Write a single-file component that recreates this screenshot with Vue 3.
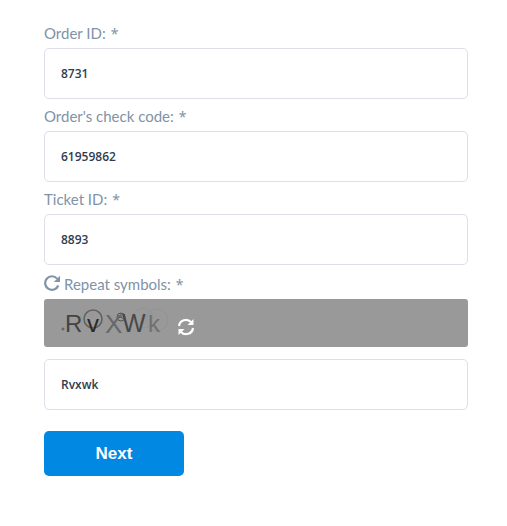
<script setup>
import { ref } from 'vue'

const fields = ref([
  { id: 'order-id', label: 'Order ID:', value: '8731' },
  { id: 'check-code', label: "Order's check code:", value: '61959862' },
  { id: 'ticket-id', label: 'Ticket ID:', value: '8893' },
])
const symbols = ref('Rvxwk')
</script>

<template>
  <form class="form" @submit.prevent>
    <div v-for="field in fields" :key="field.id" class="field">
      <label class="label" :for="field.id">{{ field.label }}<span class="mark">*</span></label>
      <input :id="field.id" v-model="field.value" class="input" type="text" required />
    </div>

    <div class="field">
      <label class="label label-icon" for="symbols">
        <svg class="reload" viewBox="0 0 16 16" aria-hidden="true">
          <path d="M13.1 3.6A6.8 6.8 0 1 0 14.3 10.5" fill="none" stroke="currentColor" stroke-width="2.2" />
          <path d="M16 .8V7H9.8z" fill="currentColor" />
        </svg>
        <span>Repeat symbols:<span class="mark">*</span></span>
      </label>
      <div class="captcha">
        <svg class="code" viewBox="0 0 116 48" aria-hidden="true">
          <g fill="none">
            <circle cx="49" cy="20" r="9" stroke="#626262" stroke-width="1.6" />
            <circle cx="77" cy="18" r="4" stroke="#555" />
            <path d="M77 14v4l4 3M74 19l3-1" stroke="#555" />
            <circle cx="113" cy="21" r="11" stroke="#929292" />
            <circle cx="99" cy="19" r="10" stroke="#949494" />
            <circle cx="19" cy="30" r="1" stroke="#555" />
          </g>
          <g class="glyphs">
            <text x="21" y="33" font-size="24" fill="#444">R</text>
            <text x="43" y="33" font-size="24" fill="#292929">v</text>
            <text x="61" y="34" font-size="26" fill="#686868">X</text>
            <text x="78" y="33" font-size="25" fill="#484848">W</text>
            <text x="104" y="33" font-size="24" fill="#707070">k</text>
          </g>
        </svg>
        <button class="refresh" type="button" aria-label="Refresh symbols">
          <svg viewBox="0 0 18 18" aria-hidden="true">
            <path d="M2 8a7 7 0 0 1 12-4M16 10a7 7 0 0 1-12 4" fill="none" stroke="currentColor" stroke-width="2.2" />
            <path d="M16.5 1v6h-6zM1.5 17v-6h6z" fill="currentColor" />
          </svg>
        </button>
      </div>
      <input id="symbols" v-model="symbols" class="input" type="text" required />
    </div>

    <button class="next" type="submit">Next</button>
  </form>
</template>

<style>
body {
  background: #fff;
}
</style>

<style scoped>
.form {
  padding: 23px 39px 50px 44px;
  font-family: Lato, "Noto Sans", sans-serif;
}
.field {
  margin-bottom: 7px;
}
.label {
  display: block;
  height: 25px;
  line-height: 20px;
  font-size: 15px;
  color: #8093a8;
}
.label-icon {
  display: flex;
  gap: 4px;
  height: 27px;
  line-height: 24px;
}
.mark {
  margin-left: 5px;
  font-family: "Noto Sans", sans-serif;
  font-size: 14px;
  line-height: 1;
}
.reload {
  width: 16px;
  height: 16px;
  margin-top: 3px;
}
.input {
  display: block;
  box-sizing: border-box;
  width: 100%;
  height: 51px;
  padding: 0 16px;
  border: 1px solid #dddfe8;
  border-radius: 5px;
  background: #fff;
  color: #313c4e;
  font-family: "Open Sans", "Noto Sans", sans-serif;
  font-size: 12px;
  font-weight: 600;
}
.captcha {
  display: flex;
  align-items: center;
  gap: 17px;
  height: 48px;
  margin-bottom: 12px;
  border-radius: 3px;
  background: #999;
}
.code {
  width: 116px;
  height: 48px;
  overflow: visible;
}
.glyphs {
  font-family: "Liberation Sans", sans-serif;
}
.refresh {
  width: 18px;
  height: 18px;
  margin-top: 8px;
  padding: 0;
  border: 0;
  background: none;
  color: #fff;
}
.refresh svg {
  display: block;
}
.next {
  display: block;
  width: 140px;
  height: 45px;
  margin-top: 21px;
  border: 0;
  border-radius: 5px;
  background: #0088e3;
  color: #fff;
  font-family: "Liberation Sans", sans-serif;
  font-size: 17px;
  font-weight: 700;
}
</style>
